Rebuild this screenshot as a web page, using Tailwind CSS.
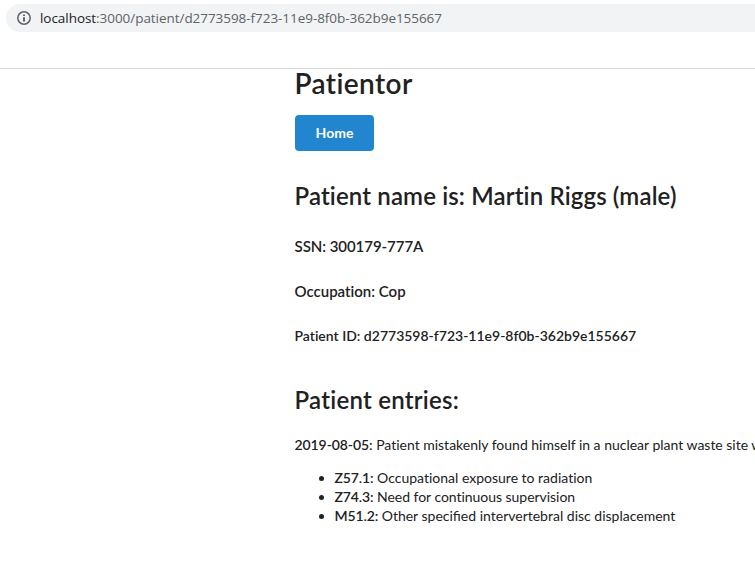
<!DOCTYPE html>
<html lang="en"><head><meta charset="utf-8"><title>Patientor</title>
<script src="https://cdn.jsdelivr.net/npm/@tailwindcss/browser@4"></script></head>
<body class="bg-white overflow-hidden w-[755px] h-[568px] font-['Lato',sans-serif] text-[14px] leading-[19px] text-[#212121]">
<header class="h-[69px] border-b border-[#dadce0] pt-1 pl-[6px]">
<div class="h-7 rounded-l-full bg-[#f1f3f4] flex items-center pl-[11px] gap-[9px] font-['Open_Sans',sans-serif] text-[13.5px] tracking-[-0.05px] text-[#5f6368]">
<svg class="size-[14px]" viewBox="0 0 14 14" fill="none" stroke="#5f6368" stroke-width="1.5"><circle cx="7" cy="7" r="6.2"/><path d="M7 6.2v4.4M7 3.4v1.7" stroke-width="2"/></svg>
<span class="whitespace-nowrap"><span class="text-[#202124]">localhost</span>:3000/patient/d2773598-f723-11e9-8f0b-362b9e155667</span>
</div></header>
<main class="pl-[294.5px] whitespace-nowrap [font-variant-ligatures:none]">
<h1 class="text-[28px] leading-[36px] font-semibold tracking-[0.4px] -mt-[4px]">Patientor</h1>
<a class="mt-[14px] ml-[0.5px] w-[79px] h-9 rounded bg-[#2185d0] text-white font-bold flex items-center justify-center pb-px">Home</a>
<h2 class="mt-[29px] text-[24px] leading-[31px] font-semibold tracking-[0.14px]">Patient name is: Martin Riggs (male)</h2>
<p class="mt-[26px] text-[15px] font-semibold tracking-[-0.05px]">SSN: 300179-777A</p>
<p class="mt-[26px] text-[15px] font-semibold">Occupation: Cop</p>
<p class="mt-[25px] font-semibold">Patient ID: d2773598-f723-11e9-8f0b-362b9e155667</p>
<h2 class="mt-[39px] text-[24px] leading-[31px] font-semibold tracking-[0.25px]">Patient entries:</h2>
<p class="mt-[20px] w-[460.5px] overflow-hidden tracking-[-0.01px]"><b class="font-semibold tracking-[-0.08px]">2019-08-05:</b> Patient mistakenly found himself in a nuclear plant waste site w</p>
<ul class="mt-[14px] pl-10 list-disc"><li><b class="font-semibold tracking-[-0.12px]">Z57.1:</b> Occupational exposure to radiation</li><li><b class="font-semibold tracking-[-0.12px]">Z74.3:</b> <span class="tracking-[-0.04px]">Need for continuous supervision</span></li><li><b class="font-semibold tracking-[-0.12px]">M51.2:</b> Other <span class="[font-variant-ligatures:normal]">specified</span> intervertebral disc displacement</li></ul>
</main></body></html>
